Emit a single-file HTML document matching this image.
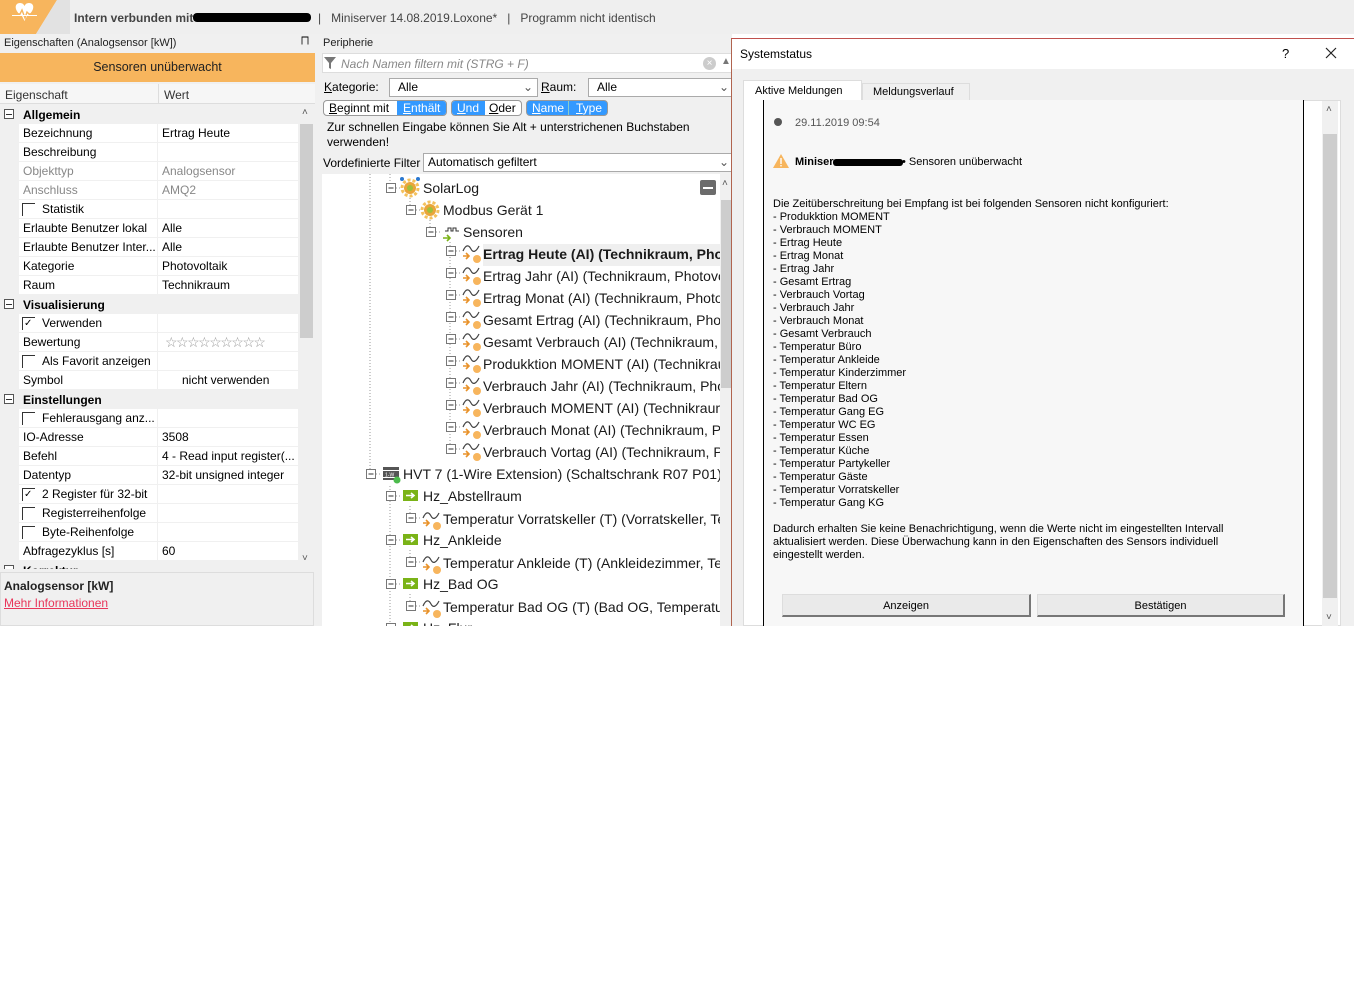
<!DOCTYPE html>
<html><head><meta charset="utf-8">
<style>
*{margin:0;padding:0;box-sizing:border-box}
body{width:1354px;height:1008px;background:#fff;position:relative;overflow:hidden;font-family:"Liberation Sans",sans-serif;color:#000}
.a{position:absolute;white-space:nowrap}
.f12{font-size:12px}
.row{position:absolute;left:19px;width:279px;height:19px;background:#fff;border-bottom:1px solid #f0f0f0;font-size:12px}
.row .k{position:absolute;left:4px;top:2px}
.row .v{position:absolute;left:143px;top:2px}
.row .sep{position:absolute;left:138px;top:0;width:1px;height:19px;background:#f0f0f0}
.grp{position:absolute;left:0;width:298px;height:19px;background:#f0f0f0;font-size:12px;font-weight:bold}
.grp .pm{position:absolute;left:4px;top:4px;width:10px;height:10px;border:1px solid #555;background:#fff}
.grp .pm:after{content:"";position:absolute;left:1px;top:3.5px;width:6px;height:1px;background:#333}
.cb{position:absolute;left:3px;top:3px;width:13px;height:13px;border-left:1px solid #333;border-top:1px solid #333;font-size:10px;line-height:11px;padding-left:1px}
.gray{color:#888}
.dlg{font-size:11px;color:#000;line-height:13px}
</style></head><body>

<!-- top bar -->
<div class="a" style="left:0;top:0;width:1354px;height:34px;background:#efefef"></div>
<svg class="a" style="left:0;top:0" width="70" height="34"><polygon points="0,0 57,0 36,34 0,34" fill="#f7b55d"/><polygon points="57,0 70,0 70,34 36,34" fill="#e2e2e2"/>
<path d="M22 16 C14 11 14 3 20 3 C23 3 24 5 24.5 6 C25 5 26 3 29 3 C35 3 35 11 27 16 L24.5 21Z" fill="#fff"/><path d="M12 14 L20 14 L22 10 L25 18 L27 12 L29 14 L37 14" stroke="#f7b55d" stroke-width="1.4" fill="none"/><path d="M12 15.5 L37 15.5" stroke="#fff" stroke-width="1"/></svg>
<div class="a f12" style="left:74px;top:11px;font-weight:bold;color:#444">Intern verbunden mit</div>
<div class="a" style="left:193px;top:13px;width:118px;height:9px;background:#000;border-radius:4px"></div>
<div class="a f12" style="left:318px;top:11px;color:#444">|&nbsp;&nbsp; Miniserver 14.08.2019.Loxone* &nbsp;&nbsp;|&nbsp;&nbsp; Programm nicht identisch</div>

<!-- left panel -->
<div class="a" style="left:0;top:34px;width:318px;height:592px;background:#f0f0f0"></div>
<div class="a" style="left:4px;top:37px;font-size:11px;color:#222">Eigenschaften (Analogsensor [kW])</div>
<div class="a" style="left:301px;top:36px;font-size:10px">&#x2A05;</div>
<div class="a" style="left:0;top:53px;width:315px;height:29px;background:#f7b55d;font-size:12.5px;text-align:center;line-height:29px;color:#222">Sensoren unüberwacht</div>
<div class="a" style="left:0;top:84px;width:315px;height:20px;background:#f6f6f6;border-bottom:1px solid #ddd;font-size:12px;color:#333"><span class="a" style="left:5px;top:4px">Eigenschaft</span><span class="a" style="left:158px;top:0;width:1px;height:20px;background:#ddd"></span><span class="a" style="left:164px;top:4px">Wert</span></div>

<div class="grp" style="top:105px"><span class="pm"></span><span class="a" style="left:23px;top:3px">Allgemein</span></div>
<div class="row" style="top:124px"><span class="k">Bezeichnung</span><span class="sep"></span><span class="v">Ertrag Heute</span></div>
<div class="row" style="top:143px"><span class="k">Beschreibung</span><span class="sep"></span></div>
<div class="row gray" style="top:162px"><span class="k">Objekttyp</span><span class="sep"></span><span class="v">Analogsensor</span></div>
<div class="row gray" style="top:181px"><span class="k">Anschluss</span><span class="sep"></span><span class="v">AMQ2</span></div>
<div class="row" style="top:200px"><span class="cb"></span><span class="k" style="left:23px">Statistik</span><span class="sep"></span></div>
<div class="row" style="top:219px"><span class="k">Erlaubte Benutzer lokal</span><span class="sep"></span><span class="v">Alle</span></div>
<div class="row" style="top:238px"><span class="k">Erlaubte Benutzer Inter...</span><span class="sep"></span><span class="v">Alle</span></div>
<div class="row" style="top:257px"><span class="k">Kategorie</span><span class="sep"></span><span class="v">Photovoltaik</span></div>
<div class="row" style="top:276px"><span class="k">Raum</span><span class="sep"></span><span class="v">Technikraum</span></div>
<div class="grp" style="top:295px"><span class="pm"></span><span class="a" style="left:23px;top:3px">Visualisierung</span></div>
<div class="row" style="top:314px"><span class="cb">&#x2713;</span><span class="k" style="left:23px">Verwenden</span><span class="sep"></span></div>
<div class="row" style="top:333px"><span class="k">Bewertung</span><span class="sep"></span><span class="v" style="left:146px;top:1px;color:#999;font-size:14px;letter-spacing:-1.5px">☆☆☆☆☆☆☆☆☆</span></div>
<div class="row" style="top:352px"><span class="cb"></span><span class="k" style="left:23px">Als Favorit anzeigen</span><span class="sep"></span></div>
<div class="row" style="top:371px"><span class="k">Symbol</span><span class="sep"></span><span class="v" style="left:163px">nicht verwenden</span></div>
<div class="grp" style="top:390px"><span class="pm"></span><span class="a" style="left:23px;top:3px">Einstellungen</span></div>
<div class="row" style="top:409px"><span class="cb"></span><span class="k" style="left:23px">Fehlerausgang anz...</span><span class="sep"></span></div>
<div class="row" style="top:428px"><span class="k">IO-Adresse</span><span class="sep"></span><span class="v">3508</span></div>
<div class="row" style="top:447px"><span class="k">Befehl</span><span class="sep"></span><span class="v">4 - Read input register(...</span></div>
<div class="row" style="top:466px"><span class="k">Datentyp</span><span class="sep"></span><span class="v">32-bit unsigned integer</span></div>
<div class="row" style="top:485px"><span class="cb">&#x2713;</span><span class="k" style="left:23px">2 Register für 32-bit</span><span class="sep"></span></div>
<div class="row" style="top:504px"><span class="cb"></span><span class="k" style="left:23px">Registerreihenfolge</span><span class="sep"></span></div>
<div class="row" style="top:523px"><span class="cb"></span><span class="k" style="left:23px">Byte-Reihenfolge</span><span class="sep"></span></div>
<div class="row" style="top:542px"><span class="k">Abfragezyklus [s]</span><span class="sep"></span><span class="v">60</span></div>
<div class="a" style="left:0;top:561px;width:298px;height:8px;overflow:hidden"><div class="grp" style="top:0"><span class="pm"></span><span class="a" style="left:23px;top:3px">Korrektur</span></div></div>
<div class="a" style="left:298px;top:105px;width:17px;height:464px;background:#f0f0f0"></div>
<div class="a" style="left:300px;top:124px;width:13px;height:214px;background:#cdcdcd"></div>
<div class="a" style="left:302px;top:107px;font-size:10px;color:#555">&#x2C4;</div>
<div class="a" style="left:302px;top:553px;font-size:10px;color:#555">&#x2C5;</div>
<div class="a" style="left:0;top:572px;width:314px;height:54px;border:1px solid #ddd;background:#f0f0f0"></div>
<div class="a f12" style="left:4px;top:579px;font-weight:bold;color:#222">Analogsensor [kW]</div>
<div class="a f12" style="left:4px;top:596px;color:#e8365a;text-decoration:underline">Mehr Informationen</div>

<!-- middle panel -->
<div class="a" style="left:318px;top:34px;width:414px;height:592px;background:#f0f0f0"></div>
<div class="a" style="left:323px;top:37px;font-size:11px;color:#222">Peripherie</div>
<div class="a" style="left:322px;top:53px;width:410px;height:20px;background:#fff;border:1px solid #ddd"></div>
<svg class="a" style="left:323px;top:56px" width="14" height="14"><path d="M1 1 L13 1 L8 7 L8 13 L6 12 L6 7Z" fill="#777"/></svg>
<div class="a" style="left:341px;top:57px;font-size:12px;font-style:italic;color:#888">Nach Namen filtern mit (STRG + F)</div>
<div class="a" style="left:703px;top:57px;width:13px;height:13px;border-radius:50%;background:#ccc;color:#fff;font-size:10px;line-height:13px;text-align:center">×</div>
<div class="a" style="left:721px;top:56px;font-size:10px;color:#777">▲</div>
<div class="a f12" style="left:324px;top:80px"><u>K</u>ategorie:</div>
<div class="a" style="left:389px;top:78px;width:149px;height:19px;background:#fff;border:1px solid #aaa;font-size:12px;padding:1px 0 0 8px">Alle<span class="a" style="left:133px;top:1px;color:#555">⌄</span></div>
<div class="a f12" style="left:541px;top:80px"><u>R</u>aum:</div>
<div class="a" style="left:588px;top:78px;width:144px;height:19px;background:#fff;border:1px solid #aaa;font-size:12px;padding:1px 0 0 8px">Alle<span class="a" style="left:130px;top:1px;color:#555">⌄</span></div>
<div class="a" style="left:323px;top:100px;width:124px;height:16px;border:1px solid #999;border-radius:4px;background:#fff;overflow:hidden;font-size:12px"><span class="a" style="left:5px;top:0"><u>B</u>eginnt mit</span><span class="a" style="left:73px;top:0;width:51px;height:16px;background:#3399ff;color:#fff;padding-left:6px"><u>E</u>nthält</span></div>
<div class="a" style="left:451px;top:100px;width:71px;height:16px;border:1px solid #999;border-radius:4px;background:#fff;overflow:hidden;font-size:12px"><span class="a" style="left:0;top:0;width:33px;height:16px;background:#3399ff;color:#fff;padding-left:5px"><u>U</u>nd</span><span class="a" style="left:37px;top:0"><u>O</u>der</span></div>
<div class="a" style="left:526px;top:100px;width:82px;height:16px;border:1px solid #999;border-radius:4px;background:#3399ff;overflow:hidden;font-size:12px;color:#fff"><span class="a" style="left:5px;top:0"><u>N</u>ame</span><span class="a" style="left:41px;top:0;width:1px;height:16px;background:#8cc"></span><span class="a" style="left:49px;top:0"><u>T</u>ype</span></div>
<div class="a f12" style="left:327px;top:120px;line-height:15px;white-space:normal;width:400px">Zur schnellen Eingabe können Sie Alt + unterstrichenen Buchstaben verwenden!</div>
<div class="a f12" style="left:323px;top:156px">Vordefinierte Filter</div>
<div class="a" style="left:423px;top:153px;width:309px;height:19px;background:#fff;border:1px solid #aaa;font-size:12px;padding:1px 0 0 4px">Automatisch gefiltert<span class="a" style="left:295px;top:1px;color:#555">⌄</span></div>
<div class="a" style="left:322px;top:174px;width:398px;height:452px;background:#fff"></div>
<div class="a" style="left:720px;top:174px;width:12px;height:452px;background:#f0f0f0"></div>
<div class="a" style="left:721px;top:200px;width:10px;height:188px;background:#cdcdcd"></div>
<div class="a" style="left:722px;top:178px;font-size:10px;color:#555">&#x2C4;</div>
<div class="a" style="left:700px;top:180px;width:16px;height:15px;background:#6b6b6b;border-radius:2px"><div class="a" style="left:3px;top:7px;width:10px;height:2px;background:#fff"></div></div>
<div class="a" style="left:483px;top:244px;width:237px;height:22px;background:#efefef"></div>

<svg class="a" style="left:322px;top:174px" width="398" height="452" font-family="Liberation Sans, sans-serif">
<defs>
<g id="sens"><path d="M1 8 C4 1 7 2 9 6 C11 10 14 9 17 3" stroke="#444" stroke-width="1.2" fill="none"/><path d="M1 13 L6 13 M4 10 L7 13 L4 16" stroke="#e8922a" stroke-width="1.6" fill="none"/><circle cx="15" cy="16" r="4" fill="#f7b55d"/></g>
<g id="ex"><rect x="0.5" y="0.5" width="9" height="9" fill="#fff" stroke="#777"/><path d="M2.5 5 L7.5 5" stroke="#333"/></g>
<g id="gear"><circle cx="9" cy="9" r="6" fill="#e9a53a"/><circle cx="9" cy="9" r="8" fill="none" stroke="#f4c15c" stroke-width="3" stroke-dasharray="3 2"/><circle cx="9" cy="9" r="3" fill="#9fbf3a"/></g>
<g id="hz"><rect x="0" y="0" width="15" height="11" fill="#7ab317"/><path d="M3 5.5 L10 5.5 M8 3 L11 5.5 L8 8" stroke="#fff" stroke-width="1.6" fill="none"/></g>
</defs>
<g stroke="#999" stroke-dasharray="1 2">
<path d="M48 0 L48 300"/><path d="M68 0 L68 12"/><path d="M88 24 L88 34"/><path d="M108 46 L108 56"/><path d="M128 68 L128 280"/>
<path d="M68 312 L68 452"/><path d="M88 332 L88 344"/><path d="M88 376 L88 388"/><path d="M88 420 L88 432"/>
</g>
<g fill="#1a1a1a" font-size="14">
<use href="#ex" x="64" y="9"/><path d="M74 14 L80 14" stroke="#999" stroke-dasharray="1 2"/><use href="#gear" x="79" y="5"/><text x="101" y="19">SolarLog</text>
<circle cx="80" cy="5" r="2" fill="#2a78d0"/><circle cx="96" cy="5" r="2" fill="#2a78d0"/>
<use href="#ex" x="84" y="31"/><path d="M94 36 L100 36" stroke="#999" stroke-dasharray="1 2"/><use href="#gear" x="99" y="27"/><text x="121" y="41">Modbus Gerät 1</text>
<use href="#ex" x="104" y="53"/><path d="M114 58 L120 58" stroke="#999" stroke-dasharray="1 2"/><path d="M123 57 L126 57 L126 54 L129 54 L129 57 L131 57 L131 54 L134 54 L134 57 L137 57" stroke="#333" fill="none"/><path d="M121 64 L127 64 M125 61 L128 64 L125 67" stroke="#7ab317" stroke-width="1.6" fill="none"/><text x="141" y="63">Sensoren</text>
<g transform="translate(124,72)"><use href="#ex" y="0"/><path d="M10 5 L16 5" stroke="#999" stroke-dasharray="1 2"/><use href="#sens" x="16" y="-3"/><text x="37" y="13" font-weight="bold">Ertrag Heute (AI) (Technikraum, Photovoltaik)</text></g>
<g transform="translate(124,94)"><use href="#ex"/><path d="M10 5 L16 5" stroke="#999" stroke-dasharray="1 2"/><use href="#sens" x="16" y="-3"/><text x="37" y="13">Ertrag Jahr (AI) (Technikraum, Photovoltaik)</text></g>
<g transform="translate(124,116)"><use href="#ex"/><path d="M10 5 L16 5" stroke="#999" stroke-dasharray="1 2"/><use href="#sens" x="16" y="-3"/><text x="37" y="13">Ertrag Monat (AI) (Technikraum, Photovoltaik)</text></g>
<g transform="translate(124,138)"><use href="#ex"/><path d="M10 5 L16 5" stroke="#999" stroke-dasharray="1 2"/><use href="#sens" x="16" y="-3"/><text x="37" y="13">Gesamt Ertrag (AI) (Technikraum, Photovoltaik)</text></g>
<g transform="translate(124,160)"><use href="#ex"/><path d="M10 5 L16 5" stroke="#999" stroke-dasharray="1 2"/><use href="#sens" x="16" y="-3"/><text x="37" y="13">Gesamt Verbrauch (AI) (Technikraum, Photovoltaik)</text></g>
<g transform="translate(124,182)"><use href="#ex"/><path d="M10 5 L16 5" stroke="#999" stroke-dasharray="1 2"/><use href="#sens" x="16" y="-3"/><text x="37" y="13">Produkktion MOMENT (AI) (Technikraum, Photovoltaik)</text></g>
<g transform="translate(124,204)"><use href="#ex"/><path d="M10 5 L16 5" stroke="#999" stroke-dasharray="1 2"/><use href="#sens" x="16" y="-3"/><text x="37" y="13">Verbrauch Jahr (AI) (Technikraum, Photovoltaik)</text></g>
<g transform="translate(124,226)"><use href="#ex"/><path d="M10 5 L16 5" stroke="#999" stroke-dasharray="1 2"/><use href="#sens" x="16" y="-3"/><text x="37" y="13">Verbrauch MOMENT (AI) (Technikraum, Photovoltaik)</text></g>
<g transform="translate(124,248)"><use href="#ex"/><path d="M10 5 L16 5" stroke="#999" stroke-dasharray="1 2"/><use href="#sens" x="16" y="-3"/><text x="37" y="13">Verbrauch Monat (AI) (Technikraum, Photovoltaik)</text></g>
<g transform="translate(124,270)"><use href="#ex"/><path d="M10 5 L16 5" stroke="#999" stroke-dasharray="1 2"/><use href="#sens" x="16" y="-3"/><text x="37" y="13">Verbrauch Vortag (AI) (Technikraum, Photovoltaik)</text></g>
<g transform="translate(44,295)"><use href="#ex"/><path d="M10 5 L16 5" stroke="#999" stroke-dasharray="1 2"/><rect x="17" y="-2" width="16" height="3" fill="#555"/><rect x="17" y="2" width="16" height="6" fill="#555"/><text x="19" y="7.5" font-size="5" fill="#fff">1-W</text><rect x="17" y="9" width="16" height="2" fill="#555"/><circle cx="31" cy="11" r="3.5" fill="#4cbb4c"/><text x="37" y="10">HVT 7 (1-Wire Extension) (Schaltschrank R07 P01)</text></g>
<g transform="translate(64,317)"><use href="#ex"/><path d="M10 5 L16 5" stroke="#999" stroke-dasharray="1 2"/><use href="#hz" x="17" y="-1"/><text x="37" y="10">Hz_Abstellraum</text></g>
<g transform="translate(84,339)"><use href="#ex"/><path d="M10 5 L16 5" stroke="#999" stroke-dasharray="1 2"/><use href="#sens" x="16" y="-3"/><text x="37" y="11">Temperatur Vorratskeller (T) (Vorratskeller, Temperatur)</text></g>
<g transform="translate(64,361)"><use href="#ex"/><path d="M10 5 L16 5" stroke="#999" stroke-dasharray="1 2"/><use href="#hz" x="17" y="-1"/><text x="37" y="10">Hz_Ankleide</text></g>
<g transform="translate(84,383)"><use href="#ex"/><path d="M10 5 L16 5" stroke="#999" stroke-dasharray="1 2"/><use href="#sens" x="16" y="-3"/><text x="37" y="11">Temperatur Ankleide (T) (Ankleidezimmer, Temperatur)</text></g>
<g transform="translate(64,405)"><use href="#ex"/><path d="M10 5 L16 5" stroke="#999" stroke-dasharray="1 2"/><use href="#hz" x="17" y="-1"/><text x="37" y="10">Hz_Bad OG</text></g>
<g transform="translate(84,427)"><use href="#ex"/><path d="M10 5 L16 5" stroke="#999" stroke-dasharray="1 2"/><use href="#sens" x="16" y="-3"/><text x="37" y="11">Temperatur Bad OG (T) (Bad OG, Temperatur)</text></g>
<g transform="translate(64,449)"><use href="#ex"/><use href="#hz" x="17" y="-1"/><text x="37" y="10">Hz_Flur</text></g>
</g>
</svg>

<!-- dialog -->
<div class="a" style="left:731px;top:38px;width:623px;height:588px;background:#f0f0f0;border-left:1px solid #b0644f;border-top:1px solid #c0504d"></div>
<div class="a" style="left:732px;top:39px;width:622px;height:30px;background:#fff"></div>
<div class="a" style="left:740px;top:47px;font-size:12px">Systemstatus</div>
<div class="a" style="left:1282px;top:46px;font-size:13px">?</div>
<svg class="a" style="left:1325px;top:47px" width="12" height="12"><path d="M1 1 L11 11 M11 1 L1 11" stroke="#222" stroke-width="1.2"/></svg>
<div class="a" style="left:743px;top:100px;width:598px;height:526px;background:#fff;border:1px solid #ddd"></div>
<div class="a" style="left:743px;top:80px;width:119px;height:21px;background:#fff;border:1px solid #ddd;border-bottom:none;font-size:11px;padding:4px 0 0 11px">Aktive Meldungen</div>
<div class="a" style="left:862px;top:83px;width:108px;height:18px;background:#f0f0f0;border:1px solid #ddd;font-size:11px;padding:2px 0 0 10px">Meldungsverlauf</div>
<div class="a" style="left:763px;top:100px;width:541px;height:526px;background:#f7f7f7;border-left:1px solid #000;border-right:1px solid #000"></div>
<div class="a" style="left:1322px;top:101px;width:16px;height:525px;background:#f0f0f0"></div>
<div class="a" style="left:1323px;top:134px;width:14px;height:464px;background:#cdcdcd"></div>
<div class="a" style="left:1326px;top:104px;font-size:10px;color:#555">&#x2C4;</div>
<div class="a" style="left:1326px;top:612px;font-size:10px;color:#555">&#x2C5;</div>
<div class="a" style="left:774px;top:118px;width:8px;height:8px;border-radius:50%;background:#555"></div>
<div class="a dlg" style="left:795px;top:117px;color:#555">29.11.2019 09:54</div>
<svg class="a" style="left:772px;top:153px" width="18" height="16"><path d="M9 1 L17 15 L1 15Z" fill="#f7b55d"/><rect x="8.3" y="5" width="1.4" height="6" fill="#fff"/><rect x="8.3" y="12" width="1.4" height="1.4" fill="#fff"/></svg>
<div class="a dlg" style="left:795px;top:156px"><b>Miniser</b></div>
<div class="a" style="left:833px;top:159px;width:70px;height:7px;background:#000;border-radius:3px"></div>
<div class="a dlg" style="left:902px;top:156px">• Sensoren unüberwacht</div>
<div class="a dlg" style="left:773px;top:198px">Die Zeitüberschreitung bei Empfang ist bei folgenden Sensoren nicht konfiguriert:<br>- Produkktion MOMENT<br>- Verbrauch MOMENT<br>- Ertrag Heute<br>- Ertrag Monat<br>- Ertrag Jahr<br>- Gesamt Ertrag<br>- Verbrauch Vortag<br>- Verbrauch Jahr<br>- Verbrauch Monat<br>- Gesamt Verbrauch<br>- Temperatur Büro<br>- Temperatur Ankleide<br>- Temperatur Kinderzimmer<br>- Temperatur Eltern<br>- Temperatur Bad OG<br>- Temperatur Gang EG<br>- Temperatur WC EG<br>- Temperatur Essen<br>- Temperatur Küche<br>- Temperatur Partykeller<br>- Temperatur Gäste<br>- Temperatur Vorratskeller<br>- Temperatur Gang KG</div>
<div class="a dlg" style="left:773px;top:523px">Dadurch erhalten Sie keine Benachrichtigung, wenn die Werte nicht im eingestellten Intervall<br>aktualisiert werden. Diese Überwachung kann in den Eigenschaften des Sensors individuell<br>eingestellt werden.</div>
<div class="a" style="left:782px;top:594px;width:249px;height:23px;background:#eaeaea;border:1px solid #ddd;border-right:2px solid #777;border-bottom:2px solid #777;font-size:11px;text-align:center;line-height:22px">Anzeigen</div>
<div class="a" style="left:1037px;top:594px;width:248px;height:23px;background:#eaeaea;border:1px solid #ddd;border-right:2px solid #777;border-bottom:2px solid #777;font-size:11px;text-align:center;line-height:22px">Bestätigen</div>
<div class="a" style="left:0;top:626px;width:1354px;height:382px;background:#fff"></div>
</body></html>
